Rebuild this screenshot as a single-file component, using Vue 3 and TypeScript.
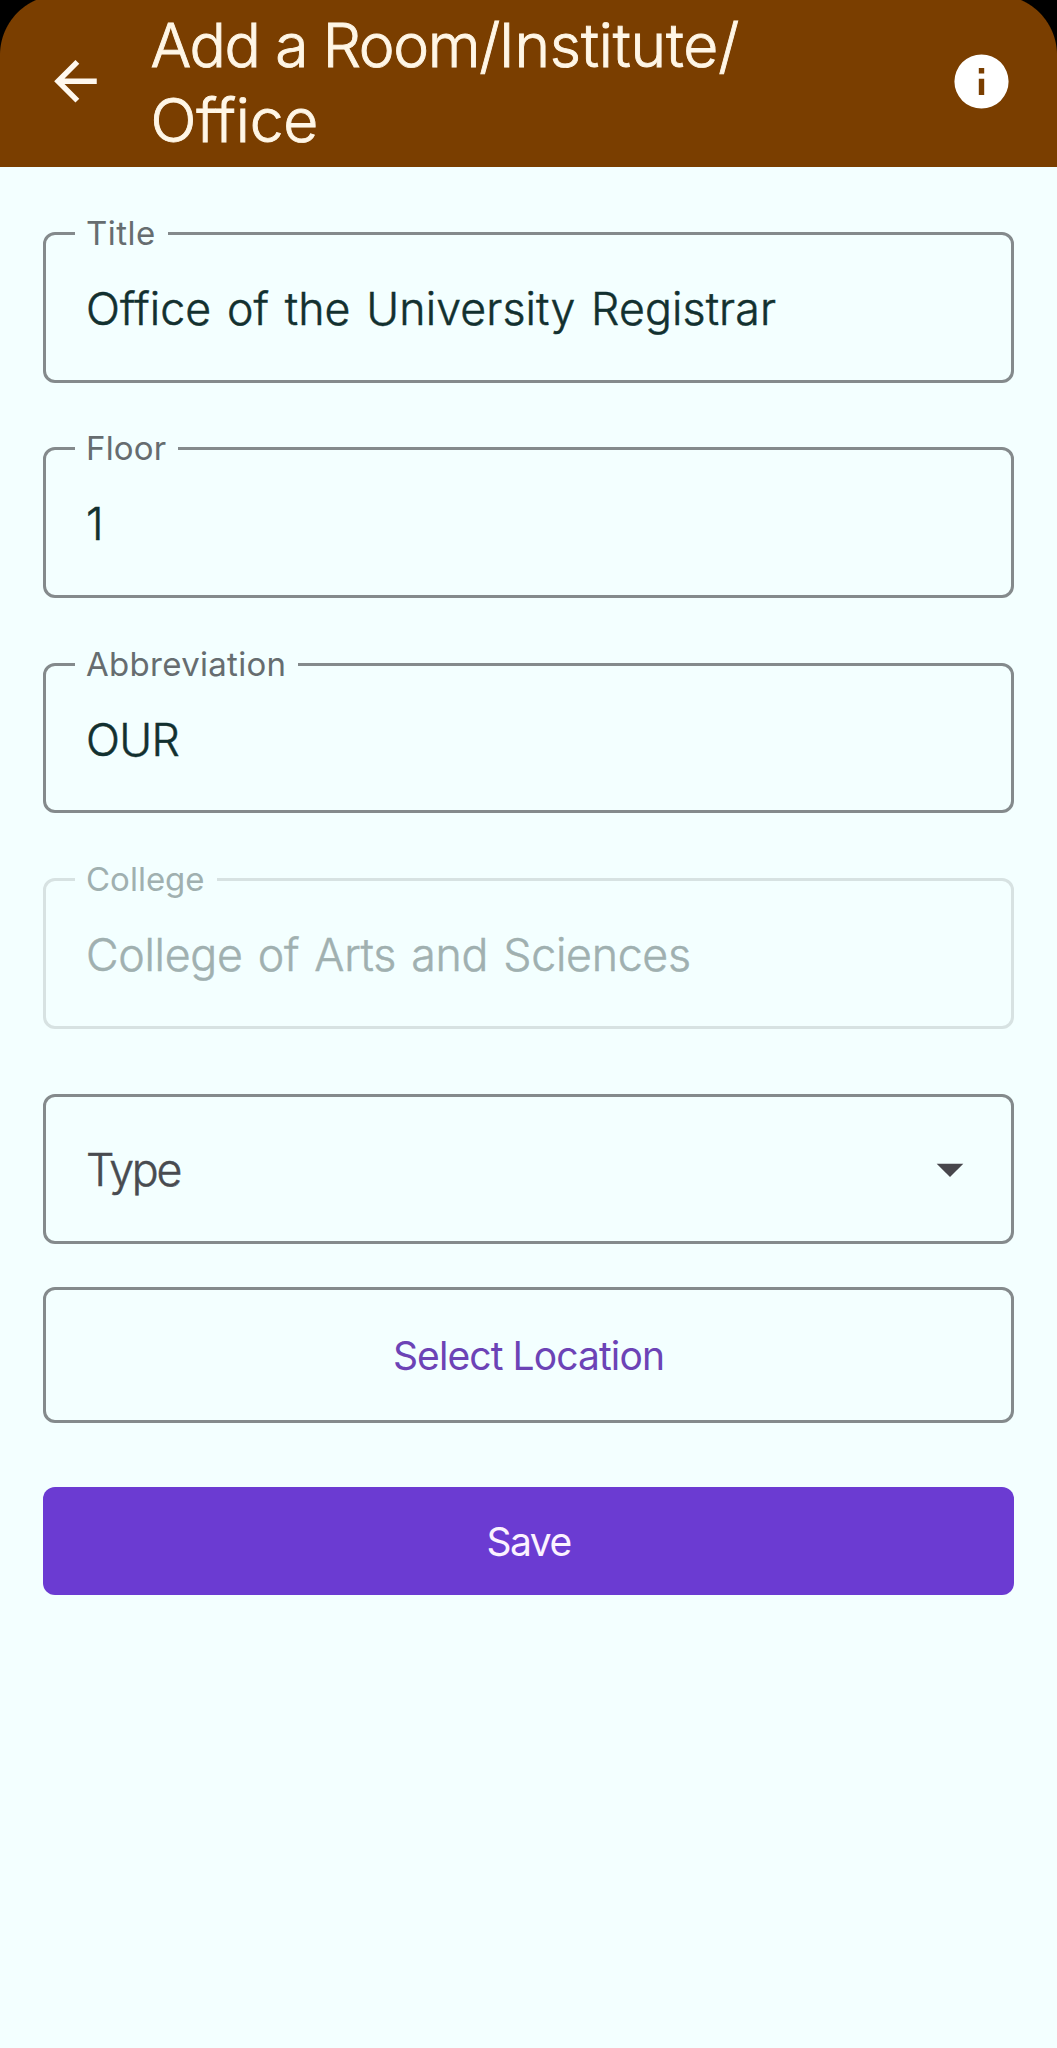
<script setup lang="ts">
interface Field {
  key: string
  label: string
  value: string
  disabled?: boolean
}

const fields: Field[] = [
  { key: 'title', label: 'Title', value: 'Office of the University Registrar' },
  { key: 'floor', label: 'Floor', value: '1' },
  { key: 'abbreviation', label: 'Abbreviation', value: 'OUR' },
  { key: 'college', label: 'College', value: 'College of Arts and Sciences', disabled: true },
]
</script>

<template>
  <main class="screen">
    <header class="bar">
      <svg class="back" viewBox="0 0 24 24" aria-label="Back">
        <path d="M20,11V13H8L13.5,18.5L12.08,19.92L4.16,12L12.08,4.08L13.5,5.5L8,11H20Z" />
      </svg>
      <h1 class="heading">Add a Room/<span class="loose">Institute/<br />Office</span></h1>
      <svg class="info" viewBox="0 0 24 24" aria-label="Info">
        <path d="M13,9H11V7H13M13,17H11V11H13M12,2A10,10 0 1,0 22,12A10,10 0 0,0 12,2Z" />
      </svg>
    </header>

    <form class="form">
      <div v-for="f in fields" :key="f.key" class="field" :class="[f.key, { disabled: f.disabled }]">
        <span class="label">{{ f.label }}</span>
        <span class="value">{{ f.value }}</span>
      </div>

      <div class="field select">
        <span class="value placeholder">Type</span>
        <svg class="caret" viewBox="0 0 24 24"><path d="M7,10L12,15L17,10H7Z" /></svg>
      </div>

      <button type="button" class="btn outlined">Select Location</button>
      <button type="button" class="btn filled">Save</button>
    </form>
  </main>
</template>

<style>
body {
  margin: 0;
  background: #f3ffff;
}
</style>

<style scoped>
.screen {
  box-sizing: border-box;
  min-height: 2048px;
  background: #f3ffff;
  font-family: Inter, "Liberation Sans", sans-serif;
  font-weight: 300;
  font-variant-ligatures: none;
}

.bar {
  display: flex;
  align-items: center;
  box-sizing: border-box;
  height: 167px;
  padding: 0 43px 5px 43px;
  background:
    radial-gradient(circle at 60px 55px, #7a3e00 59.5px, #000 60.5px) left top / 60px 55px no-repeat,
    radial-gradient(circle at 0 55px, #7a3e00 59.5px, #000 60.5px) right top / 60px 55px no-repeat,
    #7a3e00;
}

.back {
  width: 64.5px;
  height: 64.5px;
  fill: #fff8ee;
}

.heading {
  flex: 1;
  margin: 3px 0 0 43px;
  font-size: 60.5px;
  font-weight: 300;
  line-height: 75px;
  letter-spacing: -1.4px;
  color: #fff6e6;
  -webkit-text-stroke: 0.9px currentColor;
}

.loose {
  letter-spacing: -0.2px;
}

.info {
  width: 65px;
  height: 65px;
  fill: #fff;
}

.form {
  display: flex;
  flex-direction: column;
  padding: 65px 43px 0;
}

.field {
  position: relative;
  display: flex;
  align-items: center;
  box-sizing: border-box;
  height: 150.5px;
  margin-bottom: 64.9px;
  padding: 3px 29px 0 40px;
  border: 3px solid #848a8c;
  border-radius: 12px;
}

.label {
  position: absolute;
  top: -22px;
  left: 29px;
  padding: 0 12px 0 11px;
  background: #f3ffff;
  font-size: 33px;
  font-weight: 400;
  line-height: 40px;
  color: #666d70;
}

.value {
  flex: 1;
  font-size: 44.7px;
  line-height: 60px;
  letter-spacing: 0.1px;
  word-spacing: 3px;
  color: #12302f;
  -webkit-text-stroke: 0.5px currentColor;
}

.title .label {
  letter-spacing: 0.5px;
}

.floor .label {
  letter-spacing: 0.2px;
}

.abbreviation .label {
  letter-spacing: 0.3px;
}

.abbreviation .value {
  letter-spacing: -0.6px;
}

.college .value {
  letter-spacing: -0.3px;
}

.disabled {
  border-color: #d7e2e2;
}

.disabled .label,
.disabled .value {
  color: #a0b0b0;
}

.select {
  margin-bottom: 43px;
}

.select .placeholder {
  letter-spacing: -2.3px;
  color: #484b50;
}

.caret {
  width: 64px;
  height: 64px;
  margin-top: -3px;
  fill: #47464c;
}

.btn {
  box-sizing: border-box;
  padding: 0;
  border-radius: 12px;
  font-family: inherit;
  font-size: 39px;
  font-weight: 400;
  line-height: 50px;
}

.outlined {
  height: 135.5px;
  margin-bottom: 64px;
  padding-top: 2px;
  border: 3px solid #848a8c;
  background: transparent;
  letter-spacing: -0.9px;
  color: #6c43b6;
}

.filled {
  height: 108.3px;
  padding-top: 2px;
  border: 0;
  background: #6b3bd2;
  letter-spacing: -1.5px;
  color: #fbf2ff;
}
</style>
